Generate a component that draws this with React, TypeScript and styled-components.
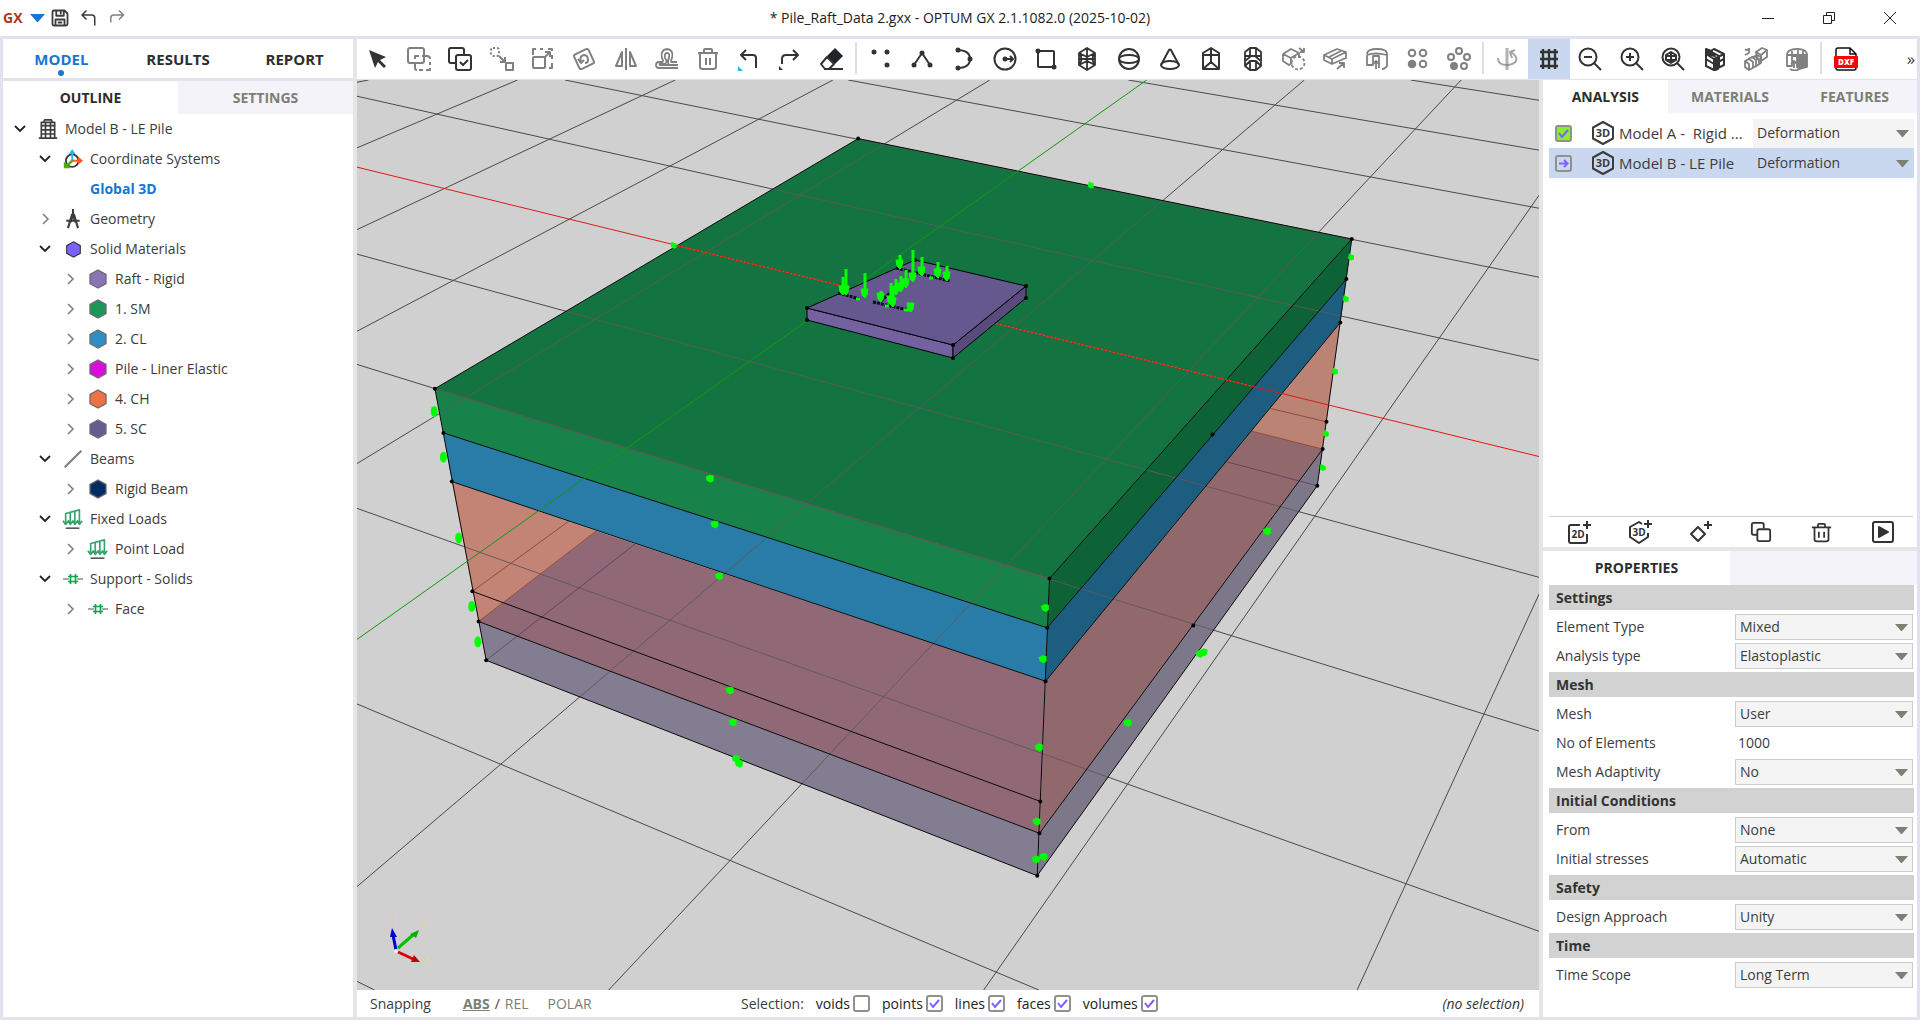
import React, { ReactNode, useId, useState } from "react";
import styled, { createGlobalStyle, css } from "styled-components";

const color = {
  frame: "#e3e1ee",
  splitter: "#e6e6e6",
  tabIdle: "#f4f3f9",
  accent: "#1976d2",
  text: "#3c3c3c",
  strong: "#2d2d2d",
  idleText: "#7b8074",
  selected: "#c9d8ee",
  section: "#d2d2d2",
  field: "#f4f4f4",
  tick: "#7b61ff",
  ink: "#333333",
  muted: "#808080",
};

const GlobalStyle = createGlobalStyle`
  *, *::before, *::after { box-sizing: border-box; }
  html, body, #root { height: 100%; }
  body {
    margin: 0;
    overflow: hidden;
    font-family: "Open Sans", "Noto Sans", sans-serif;
    font-size: 15px;
    line-height: 20px;
    color: ${color.text};
    background: #ffffff;
  }
  button, input, select { font: inherit; color: inherit; margin: 0; }
  svg { display: block; }
`;

/* ---------- frame ---------- */

const Window = styled.div`
  display: flex;
  flex-direction: column;
  height: 100vh;
`;

const TitleBar = styled.header`
  display: grid;
  grid-template-columns: 1fr auto 1fr;
  align-items: center;
  height: 36px;
`;

const QuickBar = styled.div`
  display: flex;
  align-items: center;
  padding-left: 3px;
`;

const Brand = styled.span`
  width: 25px;
  font-size: 14px;
  font-weight: 700;
  color: #b03a16;
`;

const Title = styled.h1`
  margin: 0;
  font-size: 14px;
  font-weight: 400;
  color: #1c1c1c;
`;

const Caption = styled.div`
  display: flex;
  justify-content: flex-end;
`;

const PlainButton = styled.button`
  display: grid;
  place-items: center;
  padding: 0;
  border: 0;
  background: transparent;
`;

const QuickButton = styled(PlainButton)<{ $slim?: boolean }>`
  width: ${(p) => (p.$slim ? 18 : 28)}px;
  height: 24px;
`;

const CaptionButton = styled(PlainButton)`
  width: 61px;
  height: 34px;
`;

const Body = styled.div`
  flex: 1;
  min-height: 0;
  display: grid;
  grid-template-columns: 354px minmax(0, 1fr);
  background: ${color.splitter};
  border: 3px solid ${color.frame};
`;

const LeftPanel = styled.aside`
  background: #ffffff;
  margin-right: 4px;
  min-height: 0;
`;

const Workspace = styled.div`
  display: flex;
  flex-direction: column;
  min-width: 0;
  min-height: 0;
`;

const Split = styled.div`
  flex: 1;
  min-height: 0;
  display: grid;
  grid-template-columns: minmax(0, 1fr) 374px;
  column-gap: 4px;
`;

/* ---------- tabs ---------- */

const ModeTabs = styled.nav`
  display: grid;
  grid-template-columns: repeat(3, 1fr);
  height: 42px;
  border-bottom: 3px solid ${color.frame};
`;

const ModeTab = styled(PlainButton)<{ $on?: boolean }>`
  position: relative;
  font-size: 15px;
  font-weight: 700;
  color: ${(p) => (p.$on ? color.accent : color.strong)};
  ${(p) =>
    p.$on &&
    css`
      &::after {
        content: "";
        position: absolute;
        bottom: 2px;
        left: calc(50% - 3px);
        width: 6px;
        height: 6px;
        border-radius: 50%;
        background: ${color.accent};
      }
    `}
`;

const Tabs = styled.div<{ $count: number }>`
  display: grid;
  grid-template-columns: repeat(${(p) => p.$count}, 1fr);
  height: 33px;
`;

const Tab = styled(PlainButton)<{ $on?: boolean }>`
  font-size: 14px;
  font-weight: 700;
  color: ${(p) => (p.$on ? color.strong : color.idleText)};
  background: ${(p) => (p.$on ? "#ffffff" : color.tabIdle)};
`;

/* ---------- outline tree ---------- */

const Tree = styled.ul`
  list-style: none;
  margin: 0;
  padding: 0;
`;

const TreeRow = styled.li<{ $level: number; $current?: boolean }>`
  display: flex;
  align-items: center;
  height: 30px;
  padding-left: ${(p) => 9 + p.$level * 25}px;
  ${(p) => p.$current && `color: ${color.accent}; font-weight: 700;`}
`;

const Twist = styled(PlainButton)`
  width: 16px;
  height: 20px;
  margin-right: 8px;
`;

const TreeIcon = styled.span`
  display: grid;
  place-items: center;
  width: 24px;
  height: 24px;
  margin-right: 5px;
`;

const TreeLabel = styled.span`
  font-size: 14px;
`;

/* ---------- toolbar ---------- */

const Toolbar = styled.div`
  display: flex;
  align-items: stretch;
  height: 41px;
  background: #ffffff;
  border-bottom: 1px solid ${color.frame};
  overflow: hidden;
`;

const ToolGroup = styled.div<{ $width: number }>`
  display: grid;
  grid-auto-flow: column;
  grid-auto-columns: 1fr;
  flex: 0 0 ${(p) => p.$width}px;
`;

const Tool = styled(PlainButton)<{ $on?: boolean; $dim?: boolean }>`
  color: ${(p) => (p.$dim ? color.muted : color.ink)};
  background: ${(p) => (p.$on ? color.selected : "transparent")};
`;

const Rule = styled.span`
  flex: 0 0 2px;
  margin: 3px 3px 5px 2px;
  background: #dedede;
`;

const More = styled(PlainButton)`
  margin-left: auto;
  width: 12px;
  font-size: 17px;
`;

/* ---------- centre ---------- */

const Stage = styled.main`
  display: flex;
  flex-direction: column;
  min-width: 0;
  min-height: 0;
`;

const Viewport = styled.div`
  flex: 1;
  min-height: 0;
  background: #d0d0d0;
  > svg { width: 100%; height: 100%; }
`;

const StatusBar = styled.footer`
  display: grid;
  grid-template-columns: 371px 1fr auto;
  align-items: center;
  height: 27px;
  padding: 0 15px 0 13px;
  background: #ffffff;
  font-size: 14px;
`;

const Snap = styled.div`
  display: flex;
  align-items: center;
  gap: 5px;
`;

const SnapMode = styled(PlainButton)<{ $on?: boolean }>`
  color: ${color.idleText};
  font-weight: ${(p) => (p.$on ? 700 : 400)};
  text-decoration: ${(p) => (p.$on ? "underline" : "none")};
`;

const SnapTitle = styled.span`
  margin-right: 27px;
`;

const Polar = styled(SnapMode)`
  margin-left: 14px;
`;

const Filters = styled.div`
  display: flex;
  align-items: center;
  gap: 12px;
`;

const Filter = styled.label`
  display: flex;
  align-items: center;
  gap: 3px;
  color: #222222;
`;

const Picked = styled.em`
  color: #333333;
`;

/* ---------- check box ---------- */

const TickBox = styled.span`
  position: relative;
  display: inline-block;
  width: 17px;
  height: 17px;
  svg { position: absolute; inset: 0; pointer-events: none; }
`;

const TickInput = styled.input<{ $fill?: string }>`
  appearance: none;
  display: block;
  width: 17px;
  height: 17px;
  border: 2px solid #8f928c;
  border-radius: 3px;
  background: ${(p) => p.$fill ?? "transparent"};
`;

/* ---------- right panel ---------- */

const RightPanel = styled.aside`
  display: flex;
  flex-direction: column;
  gap: 4px;
  min-height: 0;
`;

const Card = styled.section<{ $grow?: boolean }>`
  display: flex;
  flex-direction: column;
  background: #ffffff;
  min-height: 0;
  ${(p) => (p.$grow ? "flex: 1;" : "flex: 0 0 auto;")}
`;

const Analyses = styled.div`
  flex: 1;
  padding: 5px 3px 0 6px;
`;

const AnalysisRow = styled.div<{ $on?: boolean }>`
  display: grid;
  grid-template-columns: 18px 22px minmax(0, 1fr) 161px;
  align-items: center;
  height: 30px;
  padding-left: 6px;
  background: ${(p) => (p.$on ? color.selected : "transparent")};
`;

const ModelIcon = styled.span`
  margin-left: 18px;
`;

const ModelName = styled.span`
  padding-left: 24px;
  white-space: pre;
`;

const Actions = styled.div`
  display: grid;
  grid-template-columns: repeat(6, 1fr);
  height: 31px;
  margin: 0 4px 0 6px;
  border-top: 1px solid ${color.section};
`;

const SelectWrap = styled.span`
  position: relative;
  display: block;
  svg {
    position: absolute;
    right: 5px;
    top: calc(50% - 3px);
    pointer-events: none;
  }
`;

const SelectBox = styled.select<{ $bare?: "light" | "clear" }>`
  appearance: none;
  display: block;
  width: 100%;
  height: ${(p) => (p.$bare ? 29 : 26)}px;
  padding: 0 24px 0 4px;
  border: ${(p) => (p.$bare ? "0" : "1px solid #cccccc")};
  border-radius: 0;
  outline: 0;
  line-height: 20px;
  font-size: 14px;
  background: ${(p) => (p.$bare === "clear" ? "transparent" : color.field)};
`;

const PropertyTabs = styled.div`
  display: grid;
  grid-template-columns: 187px 1fr;
  height: 34px;
  background: ${color.tabIdle};
`;

const Sheet = styled.form`
  padding: 0 3px 26px 6px;
`;

const SectionTitle = styled.h2`
  margin: 0;
  padding: 3px 7px 2px;
  height: 25px;
  font-size: 14px;
  line-height: 20px;
  font-weight: 700;
  color: #333333;
  background: ${color.section};
`;

const SectionBody = styled.div`
  padding: 2px 1px 2px 7px;
`;

const Property = styled.div`
  display: grid;
  grid-template-columns: minmax(0, 1fr) 178px;
  align-items: center;
  height: 29px;
  font-size: 14px;
`;

const NumberBox = styled.input`
  width: 100%;
  height: 26px;
  padding: 0 3px;
  border: 0;
  outline: 0;
  background: transparent;
`;

/* ---------- icons ---------- */

type IconProps = { size?: number; children: ReactNode; w?: number };
const Icon = ({ size = 24, w = 2, children }: IconProps) => (
  <svg width={size} height={size} viewBox="0 0 24 24" fill="none" stroke="currentColor" strokeWidth={w} strokeLinejoin="round" aria-hidden="true">
    {children}
  </svg>
);

const Cursor = () => (<Icon><path d="M3 3 20 10 14 13l6 6-2 2-6-6-3 6Z" fill="currentColor" stroke="none" /></Icon>);
const SelectArea = () => (<Icon><rect x="1" y="1" width="16" height="15" rx="2" /><path d="M8 12v-3h4M15 9h5q3 0 3 3M23 15v3M23 21v2h-4M16 23h-4M8 16v5q0 2 2 2" /></Icon>);
const SelectMulti = () => (<Icon><path d="M7 16H3q-2 0-2-2V3q0-2 2-2h11q2 0 2 2v4" /><rect x="8" y="8" width="15" height="15" rx="2" /><path d="m12 15 3 3 5-5" /></Icon>);
const MoveObj = () => (<Icon><rect x="1" y="1" width="8" height="8" rx="2" strokeDasharray="2 2" /><path d="m9 9 6 6M15 10v5h-5" /><rect x="16" y="16" width="7" height="7" /></Icon>);
const ScaleObj = () => (<Icon><path d="M2 8V2h3M9 2h3M21 4V2h-4M21 8v4M21 16v5h-3" /><rect x="2" y="10" width="12" height="11" rx="1" /><path d="m13 11 6-6M14 5h5v5" /></Icon>);
const RotateObj = () => (<Icon><rect x="4" y="4" width="16" height="16" rx="2" transform="rotate(-25 12 12)" /><path d="M9 15q-2-6 3-7 4 0 4 5M6 12l3 4 3-3M16 13q0 3-3 3" /></Icon>);
const MirrorObj = () => (<Icon><path d="M12 1v22M8 5v14H2ZM16 5v14h6Z" /></Icon>);
const OffsetObj = () => (<Icon w={1.8}><path d="M23 21H4q-3 0-3-3t3-3h3q2 0 0-4-2-8 5-9 7 1 5 9-2 4 0 4h5M23 18H5q-1-1 0-1h5q3-2 0-6-1-5 2-5t2 5q-2 4 0 7" /></Icon>);
const Trash = () => (<Icon><path d="M2 6h20M8 6V3q0-1 1-1h6q1 0 1 1v3M4 6v14q0 2 3 2h10q3 0 3-2V6M10 11v7M14 11v7" /></Icon>);
const UndoTool = () => (<Icon><path d="M8 3 3 8l5 5M3 8h12q3 0 3 3v10" /><path d="M0 19v5h5Z" fill="#29b6f6" stroke="none" /></Icon>);
const RedoTool = () => (<Icon><path d="m14 3 5 5-5 5M19 8H7q-4 0-4 4v5" /><path d="M0 19v4h4Z" fill="currentColor" stroke="none" /></Icon>);
const Eraser = () => (<Icon><path d="M4 22h19M1 17l6-7 7 7-5 5H5Z" /><path d="m7 9 8-8 8 8-8 8Z" fill="#212529" stroke="none" /></Icon>);
const Points = () => (<Icon><g fill="currentColor" stroke="none"><circle cx="5" cy="5" r="2.500" /><circle cx="18" cy="5" r="2.500" /><circle cx="18" cy="18" r="2.500" /></g></Icon>);
const Polyline = () => (<Icon><path d="M4 18 12 6l8 12" /><g fill="currentColor" stroke="none"><circle cx="4" cy="18" r="2.500" /><circle cx="12" cy="6" r="2.500" /><circle cx="20" cy="18" r="2.500" /></g></Icon>);
const Arc = () => (<Icon><path d="M6 3q13 0 13 9T6 21" /><g fill="currentColor" stroke="none"><circle cx="7" cy="3" r="2.500" /><circle cx="19" cy="12" r="2.500" /><circle cx="7" cy="21" r="2.500" /></g></Icon>);
const CircleTool = () => (<Icon><circle cx="12" cy="12" r="10.500" /><circle cx="12" cy="12" r="2.500" fill="currentColor" stroke="none" /><path d="M12 12h8M17 9l3 3-3 3" /></Icon>);
const RectTool = () => (<Icon><rect x="4" y="4" width="16" height="16" rx="1" /><circle cx="4" cy="4" r="2.500" fill="currentColor" stroke="none" /><circle cx="20" cy="20" r="2.500" fill="currentColor" stroke="none" /></Icon>);
const BoxTool = () => (<Icon w={1.8}><path d="M12 1 20 6v12l-8 5-8-5V6ZM12 1v22M4 6l8 4 8-4M4 18l8-4 8 4M4 12h16M4 6q5 6 0 12M20 6q-5 6 0 12" /></Icon>);
const SphereTool = () => (<Icon><circle cx="12" cy="12" r="10" /><ellipse cx="12" cy="12" rx="10" ry="4" /></Icon>);
const ConeTool = () => (<Icon><path d="m3 18 8-15q1-1 2 0l8 15" /><ellipse cx="12" cy="18" rx="9" ry="4" /></Icon>);
const PrismTool = () => (<Icon><path d="m12 1 8 5v16H4V6ZM4 8h16M12 1v14M4 22l8-7 8 7" /></Icon>);
const CylinderTool = () => (<Icon w={1.8}><path d="M4 5 9 1h6l5 4v14l-5 4H9l-5-4ZM4 9h16M9 1v9l-5 4M15 1v9l5 4M9 14h6v9H9ZM4 19l5-5M20 19l-5-5" /></Icon>);
const CopyBox = () => (<Icon w={1.8}><path d="m1 7 8-5 8 4v5M1 7v7l6 4 3-2M1 7l8 4 8-5M9 11v5" /><circle cx="16" cy="16" r="6.500" strokeDasharray="3 2" /><path d="m17 1 5 4M22 1v4h-4" /></Icon>);
const ExtrudeBox = () => (<Icon w={1.8}><path d="m1 8 13-6 9 3v6L9 17l-8-4ZM1 8l8 4 14-7M9 12v5M6 10l12-6M14 22l7-6M16 16h5v5" /></Icon>);
const RevolveBox = () => (<Icon w={1.8}><path d="M2 7q0-5 10-5t10 5v12q-2 3-5 3M2 8v10h6V9h6v12M2 8q8-3 20 0M11 22v-8M8 17l3-3 3 3" /></Icon>);
const GridArray = () => (<Icon><circle cx="6" cy="6" r="3.300" /><circle cx="17" cy="6" r="3.300" /><circle cx="6" cy="17" r="3.300" fill="currentColor" /><circle cx="17" cy="17" r="3.300" /></Icon>);
const PolarArray = () => (<Icon><circle cx="12" cy="4" r="3" /><circle cx="4" cy="10" r="3" /><circle cx="20" cy="10" r="3" /><circle cx="7" cy="19" r="3" fill="currentColor" /><circle cx="17" cy="19" r="3" /></Icon>);
const Orbit = () => (<Icon><path d="M11 1v22" strokeWidth="3" opacity=".6" /><path d="M2 11q0 7 9 7 11-1 9-8-2-3-5-5M19 3l-5 2 2 6" opacity=".7" /></Icon>);
const GridTool = () => (<Icon w={2.4}><path d="M3 5h18M3 12h18M3 19h18M6 2v20M12 2v20M18 2v20" /></Icon>);
const Lens = ({ children }: { children: ReactNode }) => (<Icon><circle cx="10" cy="10" r="8.500" /><path d="m16 16 7 7" />{children}</Icon>);
const ZoomOut = () => (<Lens><path d="M6 10h8" /></Lens>);
const ZoomIn = () => (<Lens><path d="M6 10h8M10 6v8" /></Lens>);
const ZoomFit = () => (<Lens><path d="m10 5 5 3v5l-5 3-5-3V8ZM10 5v11M5 9h10M5 13h10" /></Lens>);
const SolidBox = () => (<Icon><path d="m3 7 8-5 10 5v11l-10 5-8-4Z" fill="#ffffff" /><path d="m3 7 8 5 10-5M11 12v11M3 12l8 5 10-5M7 4l9 5v11" /><path d="m12 13 3-2v11l-3 1Z" fill="currentColor" /><path d="m3 2 5 2 4 5-9-2Z" fill="currentColor" /></Icon>);
const SpringBox = () => (<Icon w={1.8}><path d="m12 5 6-4 5 2v7l-6 4-4-2ZM12 5l5 3 6-5M17 8v6M1 3l5-1M5 6V1M5 6 1 8" /><path d="m1 14 4-2 4 3v6l-4 2-4-3Zm3-2 4-2 4 3v6l-4 2m-1-10 4-2 4 3v5l-4 3m-1-10 3-2 4 2v6l-3 2M1 14l4 3v6" /></Icon>);
const SolidRevolve = () => (<Icon w={1.8}><path d="M12 8h10v12l-7 2-3-2Z" fill="currentColor" /><path d="M2 8q0-6 10-6t10 6M2 8v11h5V9h6v8M2 8h20M7 4v5M13 2v6M18 3v5M9 21v-7M6 17l3-3 3 3M5 22q5 3 9 0" /></Icon>);
const DxfTool = () => (
  <Icon>
    <path d="M2 9V3q0-2 2-2h12l6 6v3M16 1v6h6M2 18v3q0 2 2 2h16q2 0 2-2v-3" stroke="#111111" strokeWidth="1.500" />
    <rect x="0" y="9" width="24" height="12" rx="1" fill="#ff0000" stroke="none" />
    <text x="12" y="18" textAnchor="middle" fontSize="8" fontWeight="800" fill="#ffffff" stroke="none">DXF</text>
  </Icon>
);

const Hexagon = ({ fill, size = 20, line = "#6b6b6b" }: { fill: string; size?: number; line?: string }) => (
  <svg width={size} height={size} viewBox="0 0 20 20" aria-hidden="true">
    <path d="m10 1 8 4.500v9L10 19l-8-4.500v-9Z" fill={fill} stroke={line} strokeWidth="1.300" />
  </svg>
);
const Building = () => (<Icon size={20} w={2}><path d="M4 22V4h3l1-3h8l1 3h3v18M1 23h22M4 8h16M4 13h16M4 18h16M9 4v18M15 4v18M5 4h14" /></Icon>);
const Axes = () => (
  <Icon size={20} w={2.2}>
    <circle cx="11" cy="14" r="7.500" /><path d="m12 13-9 9" stroke="#4caf0f" strokeWidth="3" /><path d="M1 15v8h8Z" fill="#4caf0f" stroke="none" />
    <path d="M11 14V4" stroke="#29b6f6" /><path d="m7 6 4-6 4 6Z" fill="#29b6f6" stroke="none" />
    <path d="M11 14h9" stroke="#ff5722" /><path d="m18 9 6 5-6 5Z" fill="#ff5722" stroke="none" />
  </Icon>
);
const Compass = () => (<Icon size={20} w={2.5}><path d="M12 0v6M11 6 6 23M13 6l5 17M4 14h16M9 10h6M9 16l3-9 3 9" /></Icon>);
const BeamIcon = () => (<Icon size={20} w={2.6}><path d="M2 22 22 2" stroke="#808080" /></Icon>);
const LoadIcon = () => (<Icon size={22} w={1.8}><path d="M4 18V6l15-4v16M9 18V5M14 18V4M1 14l3 4 3-4 2 4 3-4 2 4 3-4 2 4 3-4" stroke="#35a56c" /><path d="M4 22h15" stroke="#5a5a5a" /></Icon>);
const SupportIcon = () => (<Icon size={20} w={2}><path d="M0 12h7M17 12h7" stroke="#8a8a8a" /><path d="M9 6v12M15 6v12M6 9h12M6 15h12" stroke="#12a34a" /></Icon>);

const ChevronDown = () => (<svg width="12" height="12" viewBox="0 0 12 12" fill="none" stroke="#222222" strokeWidth="1.800"><path d="m1 3 5 5 5-5" /></svg>);
const ChevronRight = () => (<svg width="12" height="12" viewBox="0 0 12 12" fill="none" stroke="#808080" strokeWidth="1.600"><path d="m4 1 5 5-5 5" /></svg>);
const Caret = () => (<svg width="13" height="7" viewBox="0 0 13 7" aria-hidden="true"><path d="M0 0h13L7 7H6Z" fill="#7b8074" /></svg>);

const Badge3D = () => (
  <Icon>
    <path d="m12 1 10 5.500v11L12 23 2 17.500v-11Z" />
    <text x="12" y="16" textAnchor="middle" fontSize="11" fontWeight="700" fill="currentColor" stroke="none">3D</text>
  </Icon>
);
const Add2D = () => (
  <Icon>
    <path d="M13 5H4q-2 0-2 2v14q0 2 2 2h14q2 0 2-2v-7M20 1v8M16 5h8" />
    <text x="11" y="18" textAnchor="middle" fontSize="10" fontWeight="700" fill="currentColor" stroke="none">2D</text>
  </Icon>
);
const Add3D = () => (
  <Icon>
    <path d="m14 4-3-2-9 5v10l9 6 9-6v-4M20 0v8M16 4h8" />
    <text x="11" y="16" textAnchor="middle" fontSize="10" fontWeight="700" fill="currentColor" stroke="none">3D</text>
  </Icon>
);
const AddShape = () => (<Icon><path d="m9 7 7 7-7 7-7-7ZM19 1v8M15 5h8" /></Icon>);
const Duplicate = () => (<Icon size={22}><path d="M8 15H4q-2 0-2-2V4q0-2 2-2h9q2 0 2 2v4" /><rect x="8" y="9" width="14" height="13" rx="2" /></Icon>);
const RunIcon = () => (<Icon><rect x="2" y="2" width="20" height="20" rx="2" /><path d="m8 7 9 5-9 5Z" fill="currentColor" /></Icon>);

/* ---------- data ---------- */

type Node = { label: string; level: number; open?: boolean; leaf?: boolean; icon?: ReactNode };

const outline: Node[] = [
  { label: "Model B - LE Pile", level: 0, open: true, icon: <Building /> },
  { label: "Coordinate Systems", level: 1, open: true, icon: <Axes /> },
  { label: "Global 3D", level: 1, leaf: true },
  { label: "Geometry", level: 1, icon: <Compass /> },
  { label: "Solid Materials", level: 1, open: true, icon: <Hexagon fill="#7b61ff" size={17} line="#333333" /> },
  { label: "Raft - Rigid", level: 2, icon: <Hexagon fill="#8a74b8" /> },
  { label: "1. SM", level: 2, icon: <Hexagon fill="#1d9758" /> },
  { label: "2. CL", level: 2, icon: <Hexagon fill="#2f8fc4" /> },
  { label: "Pile - Liner Elastic", level: 2, icon: <Hexagon fill="#da0edb" /> },
  { label: "4. CH", level: 2, icon: <Hexagon fill="#ee7148" /> },
  { label: "5. SC", level: 2, icon: <Hexagon fill="#685a92" /> },
  { label: "Beams", level: 1, open: true, icon: <BeamIcon /> },
  { label: "Rigid Beam", level: 2, icon: <Hexagon fill="#032c62" /> },
  { label: "Fixed Loads", level: 1, open: true, icon: <LoadIcon /> },
  { label: "Point Load", level: 2, icon: <LoadIcon /> },
  { label: "Support - Solids", level: 1, open: true, icon: <SupportIcon /> },
  { label: "Face", level: 2, icon: <SupportIcon /> },
];

type ToolDef = { name: string; icon: ReactNode; dim?: boolean; on?: boolean };

const editTools: ToolDef[] = [
  { name: "Select", icon: <Cursor /> },
  { name: "Select area", icon: <SelectArea />, dim: true },
  { name: "Multi-select", icon: <SelectMulti /> },
  { name: "Move", icon: <MoveObj />, dim: true },
  { name: "Scale", icon: <ScaleObj />, dim: true },
  { name: "Rotate", icon: <RotateObj />, dim: true },
  { name: "Mirror", icon: <MirrorObj />, dim: true },
  { name: "Offset", icon: <OffsetObj />, dim: true },
  { name: "Delete", icon: <Trash />, dim: true },
  { name: "Undo", icon: <UndoTool /> },
  { name: "Redo", icon: <RedoTool /> },
  { name: "Erase", icon: <Eraser /> },
];

const drawTools: ToolDef[] = [
  { name: "Points", icon: <Points /> },
  { name: "Polyline", icon: <Polyline /> },
  { name: "Arc", icon: <Arc /> },
  { name: "Circle", icon: <CircleTool /> },
  { name: "Rectangle", icon: <RectTool /> },
  { name: "Box", icon: <BoxTool /> },
  { name: "Sphere", icon: <SphereTool /> },
  { name: "Cone", icon: <ConeTool /> },
  { name: "Prism", icon: <PrismTool /> },
  { name: "Cylinder", icon: <CylinderTool /> },
  { name: "Copy solid", icon: <CopyBox />, dim: true },
  { name: "Extrude", icon: <ExtrudeBox />, dim: true },
  { name: "Revolve", icon: <RevolveBox />, dim: true },
  { name: "Grid array", icon: <GridArray />, dim: true },
  { name: "Polar array", icon: <PolarArray />, dim: true },
];

const viewTools: ToolDef[] = [
  { name: "Orbit", icon: <Orbit />, dim: true },
  { name: "Grid", icon: <GridTool />, on: true },
  { name: "Zoom out", icon: <ZoomOut /> },
  { name: "Zoom in", icon: <ZoomIn /> },
  { name: "Zoom to fit", icon: <ZoomFit /> },
  { name: "Solid view", icon: <SolidBox /> },
  { name: "Explode view", icon: <SpringBox />, dim: true },
  { name: "Section view", icon: <SolidRevolve />, dim: true },
];

const sections = [
  { title: "Settings", rows: [["Element Type", "Mixed"], ["Analysis type", "Elastoplastic"]] },
  { title: "Mesh", rows: [["Mesh", "User"], ["No of Elements", "1000"], ["Mesh Adaptivity", "No"]] },
  { title: "Initial Conditions", rows: [["From", "None"], ["Initial stresses", "Automatic"]] },
  { title: "Safety", rows: [["Design Approach", "Unity"]] },
  { title: "Time", rows: [["Time Scope", "Long Term"]] },
];

/* ---------- 3D scene ---------- */

type P = [number, number];
const at = ([x, y]: P): P => [Math.round((x / 1.3067 - 7) * 10) / 10, Math.round((y / 1.7231) * 10) / 10];
const poly = (pts: P[]) => pts.map((p) => at(p).join(",")).join(" ");

const gridLines: [P, P][] = [
  [[9, 28], [1554, 483]], [[281, 0], [1554, 340]], [[651, 0], [1554, 221]], [[1017, 0], [1554, 121]], [[1386, 0], [1554, 35]],
  [[9, 300], [1554, 857]], [[9, 490], [1554, 1122]], [[9, 738], [1554, 1467]], [[9, 1075], [900, 1568]], [[9, 1553], [32, 1568]],
  [[9, 4], [24, 0]], [[9, 117], [219, 0]], [[9, 258], [425, 0]], [[9, 433], [631, 0]], [[9, 661], [836, 0]],
  [[9, 1390], [1247, 0]], [[338, 1568], [1452, 0]], [[828, 1568], [1554, 198]], [[1316, 1568], [1554, 885]],
];
const redAxis: [P, P] = [[9, 150], [1554, 649]];
const greenAxis: [P, P] = [[9, 964], [1041, 0]];

const faces: { fill: string; pts: P[] }[] = [
  { fill: "#c38375", pts: [[133, 692], [322, 777], [168, 933]] },
  { fill: "#906876", pts: [[322, 777], [909, 1036], [901, 1298], [168, 933]] },
  { fill: "#91686c", pts: [[909, 1036], [1178, 605], [1271, 636], [901, 1298]] },
  { fill: "#bb8374", pts: [[1178, 605], [1294, 418], [1271, 636]] },
  { fill: "#837d92", pts: [[168, 933], [901, 1298], [898, 1371], [178, 1000]] },
  { fill: "#7d7889", pts: [[901, 1298], [1271, 636], [1264, 699], [898, 1371]] },
  { fill: "#297ca8", pts: [[122, 608], [911, 944], [909, 1036], [133, 692]] },
  { fill: "#1c5d80", pts: [[911, 944], [1302, 343], [1294, 418], [909, 1036]] },
  { fill: "#17834a", pts: [[111, 532], [914, 859], [911, 944], [122, 608]] },
  { fill: "#0e6336", pts: [[914, 859], [1309, 274], [1302, 343], [911, 944]] },
  { fill: "#137441", pts: [[664, 101], [1309, 274], [914, 859], [111, 532]] },
];
const silhouette: P[] = [[664, 101], [1309, 274], [1264, 699], [898, 1371], [178, 1000], [111, 532]];
const edges: [P, P][] = [
  [[664, 101], [1309, 274]], [[664, 101], [111, 532]], [[914, 859], [1309, 274]],
  [[122, 608], [911, 944]], [[911, 944], [1302, 343]], [[133, 692], [909, 1036]], [[909, 1036], [1294, 418]],
  [[160, 881], [902, 1243]], [[168, 933], [901, 1298]], [[901, 1298], [1271, 636]], [[178, 1000], [898, 1371]],
  [[898, 1371], [1264, 699]], [[111, 532], [178, 1000]], [[914, 859], [898, 1371]], [[1309, 274], [1264, 699]],
];
const innerEdges: [P, P][] = [
  [[160, 881], [286, 760]], [[168, 933], [322, 777]], [[1203, 566], [1276, 589]], [[1178, 605], [1271, 636]],
];
const floorEdges: [P, P][] = [[[178, 1000], [372, 800]], [[1143, 657], [1264, 699]]];
const nodes: P[] = [
  [664, 101], [1309, 274], [111, 532], [914, 859], [122, 608], [911, 944], [1302, 343], [133, 692], [909, 1036], [1294, 418],
  [160, 881], [902, 1243], [168, 933], [901, 1298], [1271, 636], [178, 1000], [898, 1371], [1264, 699], [1276, 589], [1127, 611], [1102, 940],
];
const sideSupports: P[] = [[110, 571], [122, 650], [142, 789], [159, 907], [167, 968]];
const farSupports: P[] = [[968, 180], [423, 284], [1308, 304], [1301, 376], [1287, 501], [1275, 608], [1271, 667]];
const supports: P[] = [
  [470, 687], [476, 766], [482, 855], [496, 1052], [500, 1107], [504, 1170], [508, 1178], [908, 910], [905, 998],
  [900, 1150], [897, 1278], [896, 1343], [906, 1339], [1198, 778], [1110, 989], [1115, 986], [1016, 1108],
];
/* Point loads on the raft: x, top and tip. */
const loads = [
  [486, 197, 214], [489, 189, 214], [508, 193, 217], [543, 175, 188], [556, 170, 201], [565, 177, 195], [581, 182, 197], [590, 186, 200],
  [549, 190, 207], [544, 196, 211], [539, 199, 214], [534, 203, 224], [536, 210, 226], [524, 211, 221], [554, 223, 231],
];

const Line = ({ a, b }: { a: P; b: P }) => {
  const [x1, y1] = at(a);
  const [x2, y2] = at(b);
  return <line x1={x1} y1={y1} x2={x2} y2={y2} />;
};
const Lines = ({ items }: { items: [P, P][] }) => <>{items.map(([a, b], i) => <Line key={i} a={a} b={b} />)}</>;

const Scene = () => (
  <svg viewBox="0 0 1182 910" preserveAspectRatio="xMidYMid slice" role="img" aria-label="Model view">
    <defs><clipPath id="solid"><polygon points={poly(silhouette)} /></clipPath></defs>
    <g stroke="#4a4a4a"><Lines items={gridLines} /></g>
    {faces.map((f, i) => <polygon key={i} points={poly(f.pts)} fill={f.fill} />)}
    <g stroke="#5d5a58" strokeOpacity="0.9" clipPath="url(#solid)">
      <Lines items={gridLines} />
      <Line a={[111, 532]} b={[914, 859]} />
    </g>
    <g stroke="#8f4532" strokeOpacity="0.9"><Lines items={innerEdges} /></g>
    <g stroke="#5a3555" strokeOpacity="0.7"><Lines items={floorEdges} /></g>
    <g stroke="#0a0a0a"><Lines items={edges} /></g>
    <g stroke="#109a10"><Line a={greenAxis[0]} b={greenAxis[1]} /></g>
    <g stroke="#e01818"><Line a={redAxis[0]} b={redAxis[1]} /></g>
    <g stroke="#ff3a20" strokeDasharray="2 2"><Line a={[423, 284]} b={[1180, 528]} /></g>
    <g fill="#000000">{nodes.map((n, i) => { const [x, y] = at(n); return <circle key={i} cx={x} cy={y} r="2" />; })}</g>
    <g fill="#00ff00">
      {sideSupports.map((n, i) => { const [x, y] = at(n); return <ellipse key={i} cx={x} cy={y} rx="3.500" ry="5.500" />; })}
      {farSupports.map((n, i) => { const [x, y] = at(n); return <path key={i} d={`M${x - 2} ${y - 3}l5 2v4l-3 1-3-2Z`} />; })}
      {supports.map((n, i) => { const [x, y] = at(n); return <path key={i} d={`M${x - 4} ${y - 2}l4-2 4 1v5l-3 2-4-2Z`} />; })}
    </g>

    <g stroke="#000000" strokeLinejoin="round">
      <polygon points="450,228 596,265 596,278 450,240" fill="#7462a0" />
      <polygon points="596,265 669,206 669,218 596,278" fill="#594b7c" />
      <polygon points="450,228 558,180 669,206 596,265" fill="#65588f" />
    </g>
    <g fill="#000000">
      {[[450, 228], [558, 180], [669, 206], [596, 265], [596, 278], [669, 218], [450, 240]].map(([x, y]) => <circle key={`${x}-${y}`} cx={x} cy={y} r="2" />)}
    </g>
    <g stroke="#06101c" strokeWidth="3" strokeDasharray="3 1">
      <path d="M481 213 503 219M516 222l35 8M539 188l54 13M524 221l10-9" />
    </g>
    <g stroke="#00ff00" fill="#00ff00">
      {loads.map(([x, top, tip]) => (
        <g key={`${x}-${top}`}>
          <path d={`M${x} ${top}V${tip - 4}`} strokeWidth="3" />
          <path d={`M${x - 4} ${tip - 8}h7l-1 6-2 3-3-3Z`} strokeWidth="1" />
        </g>
      ))}
      <path d="M499 219h4M528 226h4M547 230h6M572 198h4" strokeWidth="3" />
    </g>

    <g strokeWidth="3">
      <path d="M39 870 36 855" stroke="#0000d0" /><path d="m35 848 5 9h-7Z" fill="#0000d0" />
      <path d="m41 868 15-13" stroke="#00c000" /><path d="m62 850-3 8-6-4Z" fill="#00b000" />
      <path d="m41 872 15 7" stroke="#d80000" /><path d="m63 882-9 0 3-7Z" fill="#c00000" />
    </g>
    <circle cx="39" cy="871" r="2" fill="#f4f4f4" />
    <g fill="#ecd27c" fontSize="9"><text x="35" y="844">Z</text><text x="65" y="847">Y</text><text x="66" y="883">X</text></g>
  </svg>
);

/* ---------- parts ---------- */

const Tools = ({ items, width }: { items: ToolDef[]; width: number }) => (
  <ToolGroup $width={width}>
    {items.map((t) => (
      <Tool key={t.name} type="button" aria-label={t.name} $dim={t.dim} $on={t.on}>{t.icon}</Tool>
    ))}
  </ToolGroup>
);

const Tick = ({ id, label, mark, on, fill }: { id?: string; label?: string; mark?: "arrow"; on?: boolean; fill?: string }) => {
  const [checked, setChecked] = useState(!!on);
  return (
    <TickBox>
      <TickInput type="checkbox" id={id} aria-label={label} checked={checked} onChange={() => setChecked(!checked)} $fill={fill} />
      {checked && (
        <svg width="17" height="17" viewBox="0 0 17 17" fill="none" stroke={color.tick} strokeWidth="2">
          <path d={mark === "arrow" ? "M4 8.500h8M9 5l3.500 3.500L9 12" : "m4 8 3 4 6-7"} />
        </svg>
      )}
    </TickBox>
  );
};

const Choice = ({ id, label, value, bare }: { id?: string; label?: string; value: string; bare?: "light" | "clear" }) => (
  <SelectWrap>
    <SelectBox id={id} aria-label={label} defaultValue={value} $bare={bare}><option>{value}</option></SelectBox>
    <Caret />
  </SelectWrap>
);

const PropertyRow = ({ name, value }: { name: string; value: string }) => {
  const id = useId();
  return (
    <Property>
      <label htmlFor={id}>{name}</label>
      {name === "No of Elements" ? <NumberBox id={id} defaultValue={value} /> : <Choice id={id} value={value} />}
    </Property>
  );
};

const filters: [string, boolean][] = [["voids", false], ["points", true], ["lines", true], ["faces", true], ["volumes", true]];

export default function App() {
  return (
    <Window>
      <GlobalStyle />
      <TitleBar>
        <QuickBar>
          <Brand>GX</Brand>
          <QuickButton type="button" aria-label="Menu" $slim><svg width="15" height="8" viewBox="0 0 15 8"><path d="M0 0h15L8 8H7Z" fill={color.accent} /></svg></QuickButton>
          <QuickButton type="button" aria-label="Save"><Icon size={18} w={2.4}><path d="M2 4q0-2 2-2h14l4 4v14q0 2-2 2H4q-2 0-2-2ZM7 2v7h10V2M13 3v4M6 22v-8h12v8M9 18h6" /></Icon></QuickButton>
          <QuickButton type="button" aria-label="Undo"><Icon size={18}><path d="M10 2 4 8l6 6M4 8h13q4 0 4 4v10" /></Icon></QuickButton>
          <QuickButton type="button" aria-label="Redo"><Icon size={18}><path d="m16 2 6 6-6 6M22 8H9q-4 0-4 4v6" stroke={color.muted} /></Icon></QuickButton>
        </QuickBar>
        <Title>* Pile_Raft_Data 2.gxx - OPTUM GX 2.1.1082.0 (2025-10-02)</Title>
        <Caption>
          <CaptionButton type="button" aria-label="Minimise"><svg width="12" height="12" viewBox="0 0 12 12" stroke="#222222"><path d="M0 6.500h12" /></svg></CaptionButton>
          <CaptionButton type="button" aria-label="Restore"><svg width="12" height="12" viewBox="0 0 12 12" fill="none" stroke="#222222"><path d="M.5 3.500h8v8h-8ZM3.500 3.500v-3h8v8h-3" /></svg></CaptionButton>
          <CaptionButton type="button" aria-label="Close"><svg width="12" height="12" viewBox="0 0 12 12" stroke="#222222"><path d="m0 0 12 12M12 0 0 12" /></svg></CaptionButton>
        </Caption>
      </TitleBar>

      <Body>
        <LeftPanel>
          <ModeTabs>
            <ModeTab type="button" $on>MODEL</ModeTab>
            <ModeTab type="button">RESULTS</ModeTab>
            <ModeTab type="button">REPORT</ModeTab>
          </ModeTabs>
          <Tabs $count={2}>
            <Tab type="button" $on>OUTLINE</Tab>
            <Tab type="button">SETTINGS</Tab>
          </Tabs>
          <Tree>
            {outline.map((n) => (
              <TreeRow key={n.label} $level={n.level} $current={n.leaf}>
                <Twist type="button" aria-label={`Toggle ${n.label}`} disabled={n.leaf}>
                  {n.leaf ? null : n.open ? <ChevronDown /> : <ChevronRight />}
                </Twist>
                <TreeIcon>{n.icon}</TreeIcon>
                <TreeLabel>{n.label}</TreeLabel>
              </TreeRow>
            ))}
          </Tree>
        </LeftPanel>

        <Workspace>
          <Toolbar>
            <Tools items={editTools} width={496} />
            <Rule />
            <Tools items={drawTools} width={620} />
            <Rule />
            <Tools items={viewTools} width={331} />
            <Rule />
            <Tools items={[{ name: "Import DXF", icon: <DxfTool /> }]} width={42} />
            <More type="button" aria-label="More tools">»</More>
          </Toolbar>

          <Split>
            <Stage>
              <Viewport><Scene /></Viewport>
              <StatusBar>
                <Snap>
                  <SnapTitle>Snapping</SnapTitle>
                  <SnapMode type="button" $on>ABS</SnapMode>
                  <span>/</span>
                  <SnapMode type="button">REL</SnapMode>
                  <Polar type="button">POLAR</Polar>
                </Snap>
                <Filters>
                  <span>Selection:</span>
                  {filters.map(([name, on]) => (
                    <Filter key={name} htmlFor={`pick-${name}`}>{name}<Tick id={`pick-${name}`} on={on} /></Filter>
                  ))}
                </Filters>
                <Picked>(no selection)</Picked>
              </StatusBar>
            </Stage>

            <RightPanel>
              <Card $grow>
                <Tabs $count={3}>
                  <Tab type="button" $on>ANALYSIS</Tab>
                  <Tab type="button">MATERIALS</Tab>
                  <Tab type="button">FEATURES</Tab>
                </Tabs>
                <Analyses>
                  <AnalysisRow>
                    <Tick label="Model A" on fill="#8aee2a" />
                    <ModelIcon><Badge3D /></ModelIcon>
                    <ModelName>Model A -  Rigid ...</ModelName>
                    <Choice label="Model A analysis" value="Deformation" bare="light" />
                  </AnalysisRow>
                  <AnalysisRow $on>
                    <Tick label="Model B" on mark="arrow" />
                    <ModelIcon><Badge3D /></ModelIcon>
                    <ModelName>Model B - LE Pile</ModelName>
                    <Choice label="Model B analysis" value="Deformation" bare="clear" />
                  </AnalysisRow>
                </Analyses>
                <Actions>
                  <Tool type="button" aria-label="Add 2D model"><Add2D /></Tool>
                  <Tool type="button" aria-label="Add 3D model"><Add3D /></Tool>
                  <Tool type="button" aria-label="Add shape"><AddShape /></Tool>
                  <Tool type="button" aria-label="Duplicate"><Duplicate /></Tool>
                  <Tool type="button" aria-label="Delete model"><Icon size={21}><path d="M1 6h22M8 6V3q0-1 1-1h6q1 0 1 1v3M4 6v14q0 2 3 2h10q3 0 3-2V6M9 11v7M15 11v7" /></Icon></Tool>
                  <Tool type="button" aria-label="Run"><RunIcon /></Tool>
                </Actions>
              </Card>
              <Card>
                <PropertyTabs><Tab type="button" $on>PROPERTIES</Tab></PropertyTabs>
                <Sheet>
                  {sections.map((s) => (
                    <React.Fragment key={s.title}>
                      <SectionTitle>{s.title}</SectionTitle>
                      <SectionBody>{s.rows.map(([n, v]) => <PropertyRow key={n} name={n} value={v} />)}</SectionBody>
                    </React.Fragment>
                  ))}
                </Sheet>
              </Card>
            </RightPanel>
          </Split>
        </Workspace>
      </Body>
    </Window>
  );
}
